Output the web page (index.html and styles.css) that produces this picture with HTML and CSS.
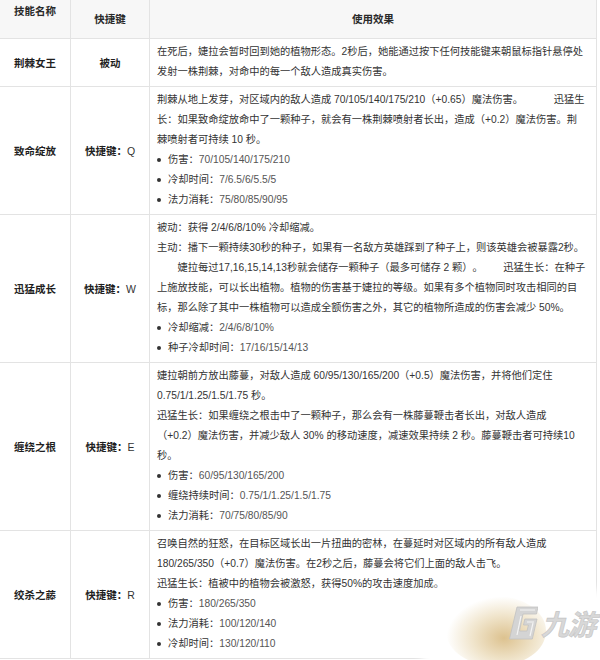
FILE: index.html
```html
<!DOCTYPE html>
<html lang="zh-CN">
<head>
<meta charset="utf-8">
<title>婕拉技能介绍</title>
<link rel="stylesheet" href="styles.css">
</head>
<body>
<div class="page">
  <table class="skills">
    <thead>
      <tr>
        <th class="col-name h-name">技能名称</th>
        <th class="col-key">快捷键</th>
        <th class="col-effect">使用效果</th>
      </tr>
    </thead>
    <tbody>
      <tr>
        <td class="name">荆棘女王</td>
        <td class="key">被动</td>
        <td class="effect">
          <p>在死后，婕拉会暂时回到她的植物形态。2秒后，她能通过按下任何技能键来朝鼠标指针悬停处发射一株荆棘，对命中的每一个敌人造成真实伤害。</p>
        </td>
      </tr>
      <tr>
        <td class="name">致命绽放</td>
        <td class="key">快捷键：<span class="letter">Q</span></td>
        <td class="effect">
          <p>荆棘从地上发芽，对区域内的敌人造成 70/105/140/175/210（+0.65）魔法伤害。　　　迅猛生长：如果致命绽放命中了一颗种子，就会有一株荆棘喷射者长出，造成（+0.2）魔法伤害。荆棘喷射者可持续 10 秒。</p>
          <ul class="stats">
            <li>伤害：<span class="val">70/105/140/175/210</span></li>
            <li>冷却时间：<span class="val">7/6.5/6/5.5/5</span></li>
            <li>法力消耗：<span class="val">75/80/85/90/95</span></li>
          </ul>
        </td>
      </tr>
      <tr>
        <td class="name">迅猛成长</td>
        <td class="key">快捷键：<span class="letter">W</span></td>
        <td class="effect">
          <p>被动：获得 2/4/6/8/10% 冷却缩减。</p>
          <p>主动：播下一颗持续30秒的种子，如果有一名敌方英雄踩到了种子上，则该英雄会被暴露2秒。</p>
          <p class="indent">婕拉每过17,16,15,14,13秒就会储存一颗种子（最多可储存 2 颗）。　　迅猛生长：在种子上施放技能，可以长出植物。植物的伤害基于婕拉的等级。如果有多个植物同时攻击相同的目标，那么除了其中一株植物可以造成全额伤害之外，其它的植物所造成的伤害会减少 50%。</p>
          <ul class="stats">
            <li>冷却缩减：<span class="val">2/4/6/8/10%</span></li>
            <li>种子冷却时间：<span class="val">17/16/15/14/13</span></li>
          </ul>
        </td>
      </tr>
      <tr>
        <td class="name">缠绕之根</td>
        <td class="key">快捷键：<span class="letter">E</span></td>
        <td class="effect">
          <p>婕拉朝前方放出藤蔓，对敌人造成 60/95/130/165/200（+0.5）魔法伤害，并将他们定住 0.75/1/1.25/1.5/1.75 秒。</p>
          <p>迅猛生长：如果缠绕之根击中了一颗种子，那么会有一株藤蔓鞭击者长出，对敌人造成（+0.2）魔法伤害，并减少敌人 30% 的移动速度，减速效果持续 2 秒。藤蔓鞭击者可持续10 秒。</p>
          <ul class="stats">
            <li>伤害：<span class="val">60/95/130/165/200</span></li>
            <li>缠绕持续时间：<span class="val">0.75/1/1.25/1.5/1.75</span></li>
            <li>法力消耗：<span class="val">70/75/80/85/90</span></li>
          </ul>
        </td>
      </tr>
      <tr>
        <td class="name">绞杀之藤</td>
        <td class="key">快捷键：<span class="letter">R</span></td>
        <td class="effect">
          <p>召唤自然的狂怒，在目标区域长出一片扭曲的密林，在蔓延时对区域内的所有敌人造成 180/265/350（+0.7）魔法伤害。在2秒之后，藤蔓会将它们上面的敌人击飞。</p>
          <p>迅猛生长：植被中的植物会被激怒，获得50%的攻击速度加成。</p>
          <ul class="stats">
            <li>伤害：<span class="val">180/265/350</span></li>
            <li>法力消耗：<span class="val">100/120/140</span></li>
            <li>冷却时间：<span class="val">130/120/110</span></li>
          </ul>
        </td>
      </tr>
    </tbody>
  </table>

  <div class="watermark" aria-hidden="true">
    <div class="wm-fade"></div>
    <div class="wm-glow"></div>
    <div class="wm-logo">
      <svg class="wm-mark" viewBox="0 0 30 34" width="30" height="34">
        <path d="M9 1 H30 L28.5 8 H15 L11.5 25 H19 L20.4 19 H15.5 L16.8 13 H29 L24.3 33 H1.5 Z" fill="#d4d4d4" stroke="#c2c2c2" stroke-width="0.8"/>
        <path d="M12 4 H27 M13 10 L9 29 M19 16 H26 M25 17 L22 30" fill="none" stroke="#f4f4f4" stroke-width="1.2"/>
      </svg>
      <span class="wm-text">九游</span>
    </div>
  </div>
</div>
</body>
</html>
```

FILE: styles.css
```css
* {
  box-sizing: border-box;
}

html,
body {
  margin: 0;
  padding: 0;
  background: #ffffff;
}

body {
  font-family: "Liberation Sans", "Noto Sans CJK SC", sans-serif;
  font-size: 10.25px;
  line-height: 20px;
  color: #333333;
  text-spacing-trim: space-all;
}

.page {
  position: relative;
  width: 600px;
  height: 660px;
  overflow: hidden;
}

.skills {
  border-collapse: separate;
  border-spacing: 0;
  table-layout: fixed;
  width: 597px;
}

.skills th,
.skills td {
  border-right: 1px solid #e3e3e3;
  border-bottom: 1px solid #e3e3e3;
  padding: 0;
}

.skills th {
  height: 39px;
  background: #f7f7f7;
  font-size: 10.5px;
  font-weight: bold;
  color: #2a2a2a;
  text-align: center;
  vertical-align: middle;
}

.skills th.h-name {
  vertical-align: top;
  padding-top: 1px;
}

.col-name {
  width: 71px;
}

.col-key {
  width: 79px;
}

.col-effect {
  width: 447px;
}

.name,
.key {
  text-align: center;
  vertical-align: middle;
  font-size: 10.5px;
  font-weight: bold;
  color: #1f1f1f;
}

.letter {
  font-weight: normal;
  color: #333333;
}

.effect {
  vertical-align: top;
  padding: 3px 10px 4px 7px !important;
  text-align: left;
}

.effect p {
  margin: 0;
}

.effect p.indent {
  text-indent: 2em;
}

.stats {
  margin: 0;
  padding: 0;
  list-style: none;
}

.stats li::before {
  content: "";
  display: inline-block;
  width: 4px;
  height: 4px;
  border-radius: 50%;
  background: #333333;
  margin-right: 7px;
  vertical-align: middle;
}

.stats .val {
  color: #555555;
}

/* watermark overlay in the bottom-right corner */
.watermark {
  position: absolute;
  left: 410px;
  top: 580px;
  width: 200px;
  height: 90px;
  pointer-events: none;
}

.wm-fade {
  position: absolute;
  left: 12px;
  top: 10px;
  width: 200px;
  height: 90px;
  background: #ffffff;
  border-radius: 14px;
  filter: blur(5px);
}

.wm-glow {
  position: absolute;
  left: 36px;
  top: 16px;
  width: 100px;
  height: 70px;
  border-radius: 50%;
  background: radial-gradient(ellipse at 58% 60%, rgba(206, 168, 96, 0.7) 0%, rgba(222, 196, 140, 0.45) 38%, rgba(255, 255, 255, 0) 70%);
}

.wm-logo {
  position: absolute;
  left: 98px;
  top: 26px;
  display: flex;
  align-items: center;
  gap: 3px;
}

.wm-mark {
  display: block;
}

.wm-text {
  font-family: "Noto Sans CJK SC", sans-serif;
  font-size: 28px;
  line-height: 34px;
  font-weight: bold;
  font-style: italic;
  color: #d8d8d8;
  letter-spacing: -1px;
  -webkit-text-stroke: 0.6px #c4c4c4;
}
```
